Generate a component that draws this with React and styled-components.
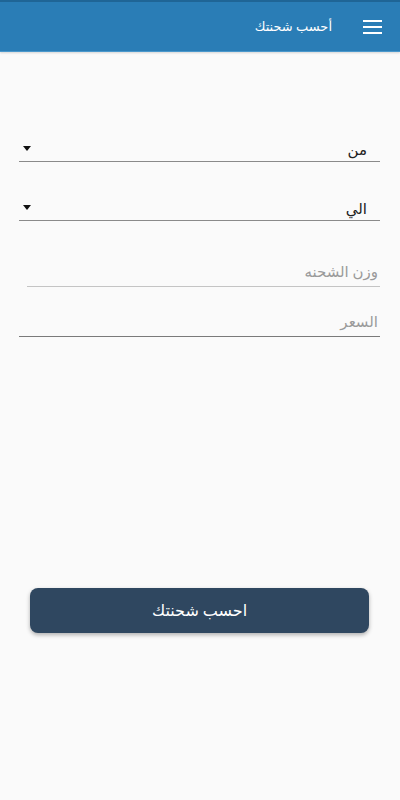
import React from "react";
import styled, { createGlobalStyle } from "styled-components";

const Global = createGlobalStyle`
  html, body { margin: 0; padding: 0; background: #fafafa; }
  body { font-family: Roboto, "DejaVu Sans", "Noto Sans", sans-serif; }
  * { box-sizing: border-box; }
`;

const Page = styled.div`
  width: 400px;
  min-height: 800px;
  background: #fafafa;
  direction: rtl;
  display: flex;
  flex-direction: column;
`;

const Header = styled.header`
  height: 52px;
  background: #2a7db6;
  border-top: 2px solid #1f6596;
  border-bottom: 1px solid #4a98cc;
  display: flex;
  align-items: center;
  padding: 0 18px 0 0;
  gap: 30px;
  box-shadow: 0 1px 2px rgba(0,0,0,0.15);
`;

const MenuButton = styled.button`
  width: 20px;
  height: 14px;
  padding: 0;
  border: 0;
  background: transparent;
  display: flex;
  flex-direction: column;
  justify-content: space-between;
`;

const MenuLine = styled.span`
  display: block;
  width: 19px;
  height: 2px;
  background: #ffffff;
`;

const Title = styled.h1`
  margin: 0;
  font-size: 13px;
  font-weight: 400;
  color: #ffffff;
`;

const Form = styled.main`
  display: flex;
  flex-direction: column;
  padding: 0 20px 0 19px;
`;

const Field = styled.div`
  height: 25px;
  margin-top: ${p => p.$top}px;
  margin-left: ${p => p.$inset || 0}px;
  border-bottom: 1px solid ${p => p.$line};
  display: flex;
  align-items: center;
  justify-content: space-between;
  padding: 0 2px 4px 2px;
`;

const Value = styled.span`
  font-size: 15px;
  color: #212121;
  padding-right: 11px;
  margin-top: 6px;
`;

const Placeholder = styled.span`
  font-size: 15px;
  color: #9a9a9a;
`;

const Caret = styled.span`
  width: 0;
  height: 0;
  border-left: 4.5px solid transparent;
  border-right: 4.5px solid transparent;
  border-top: 5px solid #111;
  margin-left: 2px;
  margin-top: 2px;
`;

const Submit = styled.button`
  margin: 251px 11px 0 11px;
  height: 45px;
  border: 0;
  border-radius: 8px;
  background: #2f4760;
  color: #ffffff;
  font-family: inherit;
  font-size: 16px;
  box-shadow: 0 2px 4px rgba(0,0,0,0.3);
`;

export default function App() {
  return (
    <Page>
      <Global />
      <Header>
        <MenuButton aria-label="menu">
          <MenuLine />
          <MenuLine />
          <MenuLine />
        </MenuButton>
        <Title>أحسب شحنتك</Title>
      </Header>
      <Form>
        <Field $top={85} $line="#8a8a8a">
          <Value>من</Value>
          <Caret />
        </Field>
        <Field $top={34} $line="#8a8a8a">
          <Value>الي</Value>
          <Caret />
        </Field>
        <Field $top={41} $inset={8} $line="#c4c4c4">
          <Placeholder>وزن الشحنه</Placeholder>
        </Field>
        <Field $top={25} $line="#7a7a7a">
          <Placeholder>السعر</Placeholder>
        </Field>
        <Submit>احسب شحنتك</Submit>
      </Form>
    </Page>
  );
}
